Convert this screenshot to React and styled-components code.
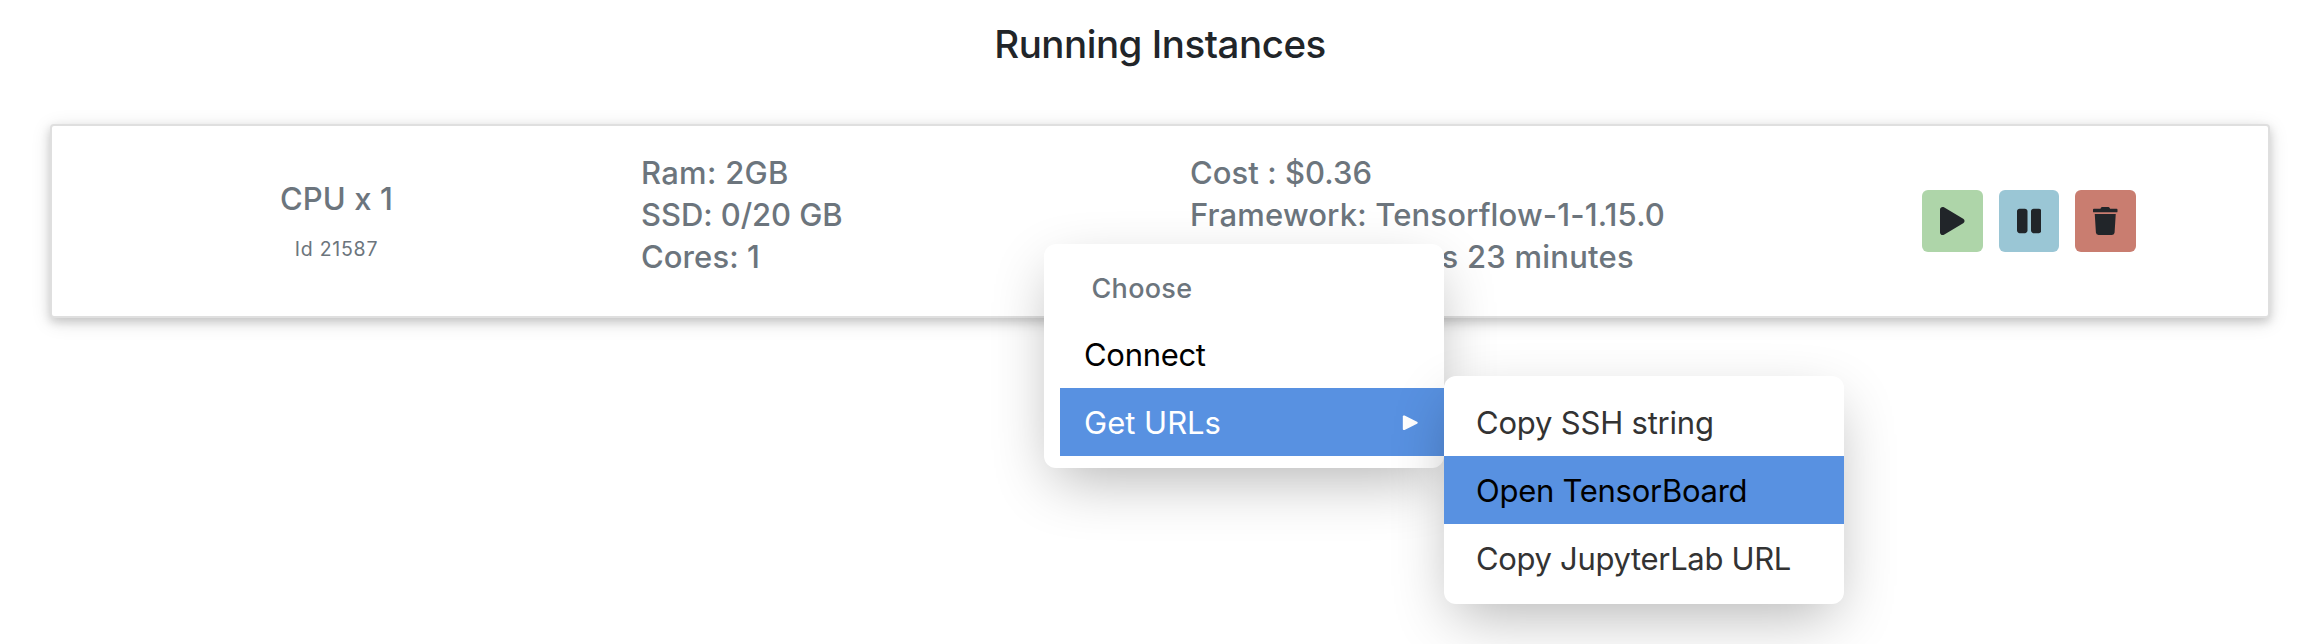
import React from 'react';
import styled, { createGlobalStyle, css } from 'styled-components';
import { FaPlay, FaPause, FaTrash } from 'react-icons/fa';

const GlobalStyle = createGlobalStyle`
  *, *::before, *::after { box-sizing: border-box; }
  body {
    margin: 0;
    background: #fff;
    color: #212529;
    font-family: Inter, "Liberation Sans", sans-serif;
    overflow: hidden;
  }
`;

const Page = styled.main`
  position: relative;
  display: flex;
  flex-direction: column;
  gap: 56px;
  height: 644px;
  padding: 20px 54px 0 50px;
  overflow: hidden;
`;

const Title = styled.h1`
  margin: 0;
  font-size: 38.5px;
  font-weight: 500;
  line-height: 48px;
  letter-spacing: -0.47px;
  text-align: center;
`;

const InstanceCard = styled.section`
  display: grid;
  grid-template-columns: repeat(4, 549px);
  height: 194px;
  padding: 0 10px;
  border: 2px solid #dfdfdf;
  border-radius: 4px;
  background: #fff;
  color: #6c757d;
  box-shadow: 0 4px 10px rgba(0, 0, 0, 0.16), 0 4px 20px rgba(0, 0, 0, 0.12);
`;

const Machine = styled.div`
  display: flex;
  flex-direction: column;
  align-items: center;
  gap: 14px;
  padding-top: 52px;
`;

const MachineName = styled.div`
  font-size: 31px;
  font-weight: 500;
  line-height: 42px;
  letter-spacing: 0.1px;
`;

const MachineId = styled.div`
  font-size: 19.5px;
  line-height: 30px;
  letter-spacing: 0.75px;
`;

const Specs = styled.div`
  display: flex;
  flex-direction: column;
  padding: 26px 0 0 30px;
`;

const Spec = styled.div`
  font-size: 31px;
  font-weight: 500;
  line-height: 42px;
  white-space: nowrap;
  letter-spacing: ${(p) => p.$tracking ?? 0}px;
`;

const Actions = styled.div`
  display: flex;
  align-items: flex-start;
  gap: 16px;
  padding: 64px 0 0 213px;
`;

const ActionButton = styled.button`
  display: flex;
  align-items: center;
  justify-content: center;
  width: 60.7px;
  height: 62px;
  padding: 0;
  border: 0;
  border-radius: 6px;
  color: #212529;
  background: ${(p) => p.$tone};

  svg {
    width: 24.5px;
    height: 28px;
  }
`;

const menuPanel = css`
  position: absolute;
  display: flex;
  flex-direction: column;
  width: 400px;
  border-radius: 12px;
  background: #fff;
  box-shadow: 0 20px 60px -10px rgba(0, 0, 0, 0.3);
`;

const Menu = styled.div`
  ${menuPanel}
  top: 244px;
  left: 1044px;
  padding: 12px 0 12px 16px;
`;

const MenuHeader = styled.div`
  height: 64px;
  padding: 2px 0 0 31.5px;
  color: #6c757d;
  font-size: 27px;
  font-weight: 500;
  line-height: 62px;
  letter-spacing: 0.3px;
`;

const MenuItem = styled.div`
  position: relative;
  display: flex;
  align-items: center;
  justify-content: space-between;
  height: 68px;
  padding: 2px 26px 0 ${(p) => p.$indent ?? 24}px;
  font-size: 31px;
  line-height: 66px;
  white-space: nowrap;
  letter-spacing: ${(p) => p.$tracking ?? 0}px;
  color: ${(p) => p.$color ?? '#333'};
  background: ${(p) => (p.$active ? '#5891e1' : 'transparent')};
`;

const Submenu = styled.div`
  ${menuPanel}
  top: -12px;
  left: 100%;
  padding: 12px 0;
`;

const Arrow = styled.svg`
  width: 16px;
  height: 16px;
  fill: #fff;
`;

export default function App() {
  return (
    <>
      <GlobalStyle />
      <Page>
        <Title>Running Instances</Title>
        <InstanceCard>
          <Machine>
            <MachineName>CPU x 1</MachineName>
            <MachineId>Id 21587</MachineId>
          </Machine>
          <Specs>
            <Spec $tracking={0.28}>Ram: 2GB</Spec>
            <Spec $tracking={-0.07}>SSD: 0/20 GB</Spec>
            <Spec $tracking={0.08}>Cores: 1</Spec>
          </Specs>
          <Specs>
            <Spec $tracking={0.05}>Cost : $0.36</Spec>
            <Spec $tracking={0.15}>Framework: Tensorflow-1-1.15.0</Spec>
            <Spec $tracking={0.24}>Running: 15 hours 23 minutes</Spec>
          </Specs>
          <Actions>
            <ActionButton $tone="#aed5a9" aria-label="Start"><FaPlay /></ActionButton>
            <ActionButton $tone="#9ac6d5" aria-label="Pause"><FaPause /></ActionButton>
            <ActionButton $tone="#c97d70" aria-label="Delete"><FaTrash /></ActionButton>
          </Actions>
        </InstanceCard>

        <Menu>
          <MenuHeader>Choose</MenuHeader>
          <MenuItem $color="#000" $tracking={-0.3}>Connect</MenuItem>
          <MenuItem $active $color="#fff">
            Get URLs
            <Arrow viewBox="0 0 16 16">
              <path d="M0.8 1.6C0.8 0.6 1.7 0.2 2.6 0.6L15 6.7C16 7.2 16 8.2 15 8.7L2.6 14.9C1.7 15.3 0.8 14.9 0.8 13.9Z" />
            </Arrow>
            <Submenu>
              <MenuItem $indent={32} $tracking={-0.2}>Copy SSH string</MenuItem>
              <MenuItem $indent={32} $tracking={-0.27} $active $color="#000">Open TensorBoard</MenuItem>
              <MenuItem $indent={32} $tracking={-0.33}>Copy JupyterLab URL</MenuItem>
            </Submenu>
          </MenuItem>
        </Menu>
      </Page>
    </>
  );
}
